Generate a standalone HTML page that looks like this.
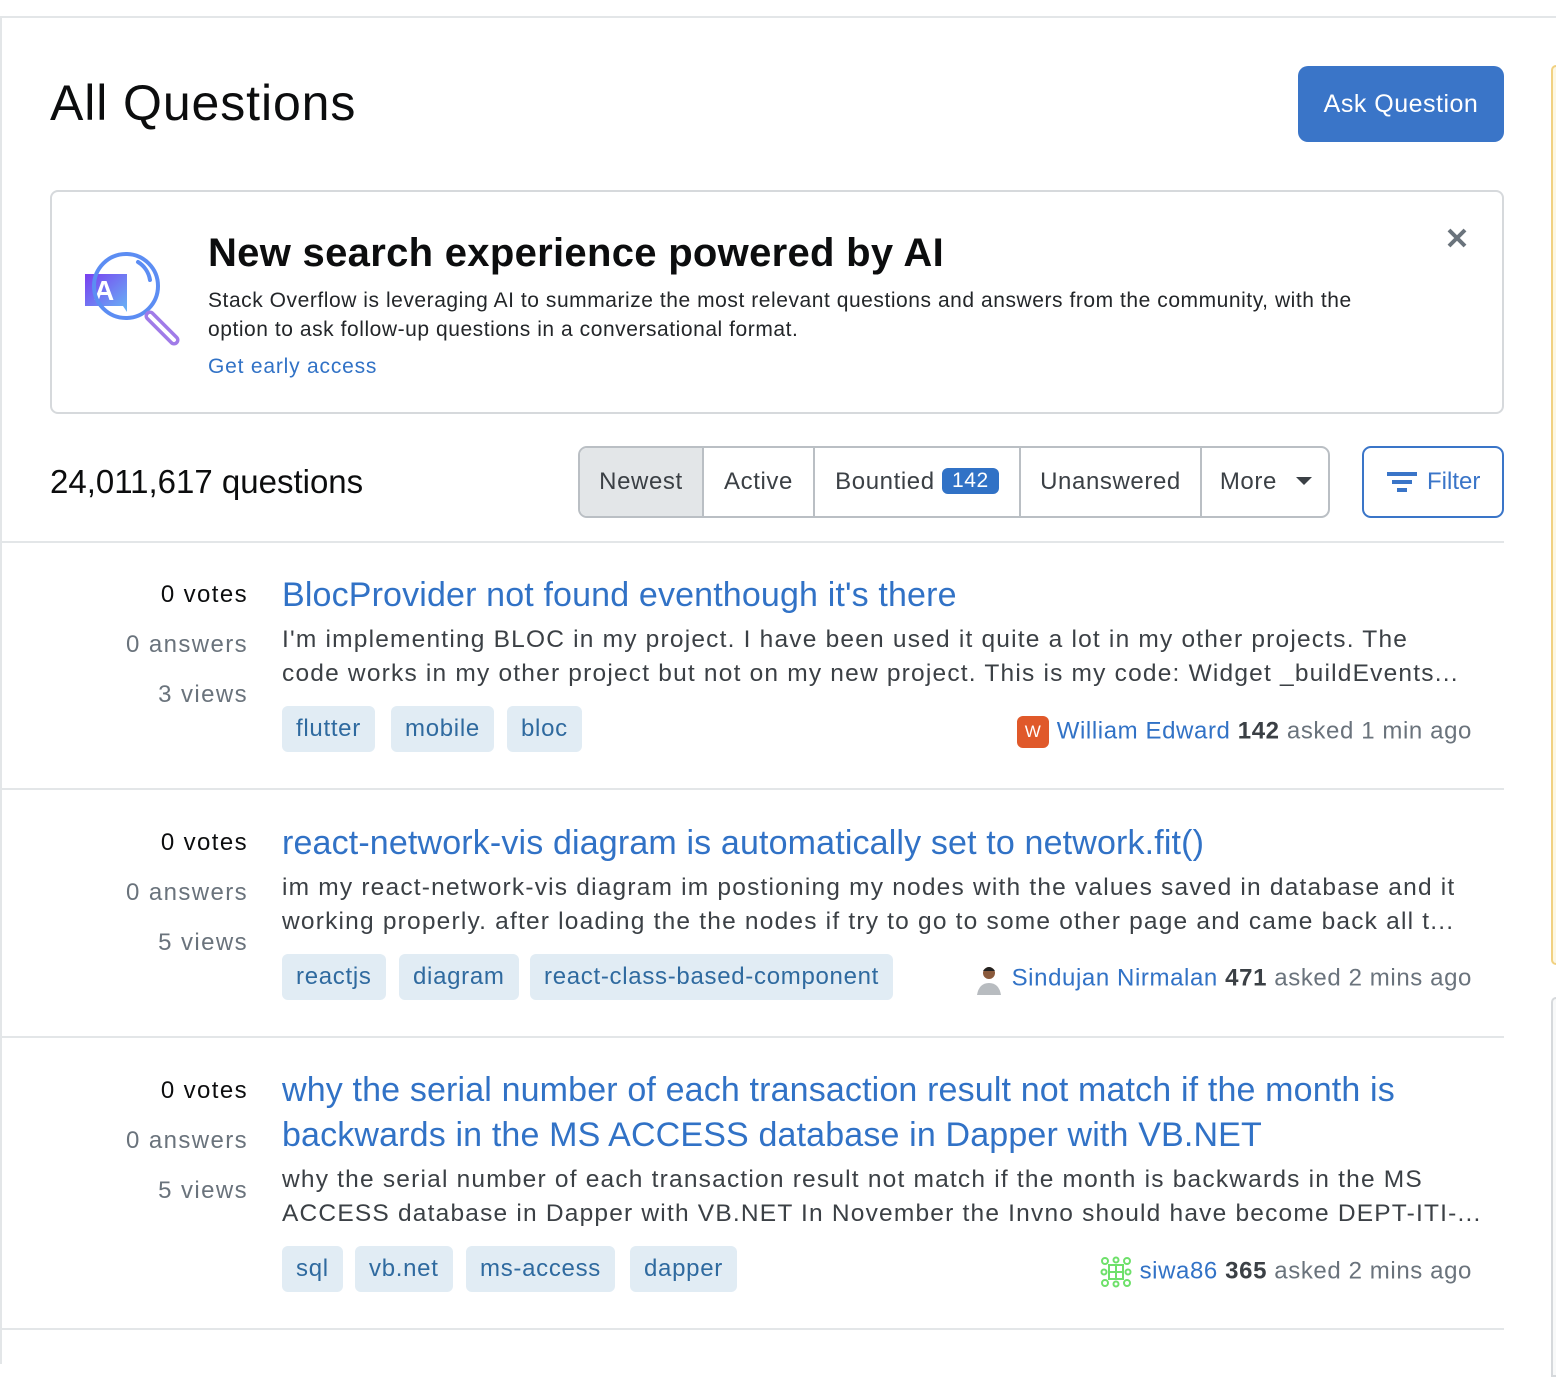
<!DOCTYPE html>
<html><head><meta charset="utf-8"><style>
*{box-sizing:border-box;margin:0;padding:0}
body{width:1556px;height:1364px;overflow:hidden;background:#fff;font-family:"Liberation Sans",Arial,sans-serif;color:#232629;position:relative}
.a{position:absolute;white-space:nowrap}
.blue{color:#3172c6}
.tag{position:absolute;height:46px;background:#e1ecf4;color:#2f6a9f;border-radius:6px;font-size:24px;line-height:46px;padding:0 14px;letter-spacing:0.7px}
.stat{position:absolute;right:1308px;font-size:24px;text-align:right;white-space:nowrap;letter-spacing:1.4px}
.title{position:absolute;left:282px;font-size:34px;color:#3172c6;line-height:45px;letter-spacing:0.15px}
.ex{position:absolute;left:282px;font-size:24.5px;color:#3b4045;line-height:34px;width:1220px;letter-spacing:1.2px;white-space:nowrap}
.sep{position:absolute;left:2px;width:1502px;height:2px;background:#e3e6e8}
.user{position:absolute;right:84px;font-size:24px;white-space:nowrap;color:#6a737c;letter-spacing:0.6px}
.user b{color:#3b4045}
.tab{position:absolute;top:0;height:68px;line-height:68px;font-size:24px;color:#3b4045;text-align:center;border-right:2px solid #babfc4;letter-spacing:0.6px}
</style></head><body>
<div class="a" style="left:0;top:16px;width:1556px;height:2px;background:#e3e6e8"></div>
<div class="a" style="left:0;top:16px;width:2px;height:1348px;background:#e3e6e8"></div>
<div class="a" style="left:1551px;top:65px;width:5px;height:900px;border:2px solid #f1d181;border-right:none;border-radius:8px 0 0 8px;background:#fdf7e2"></div>
<div class="a" style="left:1551px;top:997px;width:5px;height:380px;border:2px solid #d6d9dc;border-right:none;border-radius:8px 0 0 0;background:#f8f9f9"></div>

<div class="a" style="left:50px;top:72px;font-size:50px;line-height:62px;color:#0c0d0e;letter-spacing:0.9px">All Questions</div>
<div class="a" style="left:1298px;top:66px;width:206px;height:76px;background:#3a75c8;border-radius:10px;color:#fff;font-size:25px;line-height:76px;text-align:center;letter-spacing:0.5px">Ask Question</div>

<div class="a" style="left:50px;top:190px;width:1454px;height:224px;border:2px solid #d6d9dc;border-radius:8px"></div>
<svg class="a" style="left:80px;top:246px" width="104" height="104" viewBox="0 0 104 104">
<defs><linearGradient id="g" x1="0" y1="0" x2="1" y2="1"><stop offset="0" stop-color="#7a3ff0"/><stop offset="1" stop-color="#67b6f5"/></linearGradient></defs>
<path d="M5 28 h42 v38 l-4 -6 h-38 z" fill="url(#g)"/>
<text x="14" y="54" font-family="Liberation Sans" font-weight="bold" font-size="28" fill="#fff">A</text>
<circle cx="46" cy="40" r="32" fill="none" stroke="#5c8df3" stroke-width="4"/>
<path d="M58 16 a26 26 0 0 1 12 18" fill="none" stroke="#5c8df3" stroke-width="4" stroke-linecap="round"/>
<line x1="70" y1="70" x2="94" y2="94" stroke="#a07be8" stroke-width="11" stroke-linecap="round"/>
<line x1="70" y1="70" x2="94" y2="94" stroke="#fff" stroke-width="4" stroke-linecap="round"/>
</svg>
<div class="a" style="left:208px;top:228px;font-size:40px;font-weight:bold;line-height:50px;color:#0c0d0e;letter-spacing:0.3px">New search experience powered by AI</div>
<div class="a" style="left:208px;top:286px;font-size:21px;line-height:29px;color:#232629;white-space:normal;width:1200px;letter-spacing:0.55px">Stack Overflow is leveraging AI to summarize the most relevant questions and answers from the community, with the option to ask follow-up questions in a conversational format.</div>
<div class="a blue" style="left:208px;top:352px;font-size:21px;line-height:29px;letter-spacing:0.8px">Get early access</div>
<svg class="a" style="left:1446px;top:227px" width="22" height="22" viewBox="0 0 22 22"><path d="M3 3L19 19M19 3L3 19" stroke="#6a737c" stroke-width="4"/></svg>

<div class="a" style="left:50px;top:462px;font-size:33px;line-height:40px;color:#0c0d0e">24,011,617 questions</div>
<div class="a" style="left:578px;top:446px;width:752px;height:72px;border:2px solid #babfc4;border-radius:9px;overflow:hidden">
<div class="tab" style="left:0;width:124px;background:#e3e6e8">Newest</div>
<div class="tab" style="left:124px;width:111px">Active</div>
<div class="tab" style="left:235px;width:206px">Bountied <span style="display:inline-block;background:#3172c6;color:#fff;border-radius:6px;padding:0 10px;line-height:26px;font-size:21px;vertical-align:2px">142</span></div>
<div class="tab" style="left:441px;width:181px">Unanswered</div>
<div class="tab" style="left:622px;width:128px;border:none">More <span style="display:inline-block;width:0;height:0;border-left:8px solid transparent;border-right:8px solid transparent;border-top:8px solid #3b4045;vertical-align:4px;margin-left:12px"></span></div>
</div>
<div class="a" style="left:1362px;top:446px;width:142px;height:72px;border:2px solid #3a75c8;border-radius:9px;color:#3a75c8;font-size:24px;line-height:68px">
<svg style="position:absolute;left:23px;top:24px" width="30" height="20" viewBox="0 0 30 20"><rect x="0" y="0" width="30" height="4" fill="#3a75c8"/><rect x="5" y="8" width="20" height="4" fill="#3a75c8"/><rect x="10" y="16" width="10" height="4" fill="#3a75c8"/></svg>
<span style="position:absolute;left:63px">Filter</span></div>

<div class="sep" style="top:541px"></div>
<div class="stat" style="top:581px;color:#0c0d0e">0 votes</div>
<div class="stat" style="top:631px;color:#6a737c">0 answers</div>
<div class="stat" style="top:681px;color:#6a737c">3 views</div>
<div class="title" style="top:573px">BlocProvider not found eventhough it's there</div>
<div class="ex" style="top:623px">I'm implementing BLOC in my project. I have been used it quite a lot in my other projects. The<br>code works in my other project but not on my new project. This is my code: Widget _buildEvents...</div>
<div class="tag" style="left:282px;top:706px">flutter</div>
<div class="tag" style="left:391px;top:706px">mobile</div>
<div class="tag" style="left:507px;top:706px">bloc</div>
<div class="user" style="top:716px"><span style="display:inline-block;width:32px;height:32px;background:#e0592a;border-radius:6px;color:#fff;font-size:17px;line-height:32px;text-align:center;vertical-align:middle;margin-right:8px;letter-spacing:0">W</span><span class="blue">William Edward</span> <b>142</b> asked 1 min ago</div>

<div class="sep" style="top:788px"></div>
<div class="stat" style="top:829px;color:#0c0d0e">0 votes</div>
<div class="stat" style="top:879px;color:#6a737c">0 answers</div>
<div class="stat" style="top:929px;color:#6a737c">5 views</div>
<div class="title" style="top:821px">react-network-vis diagram is automatically set to network.fit()</div>
<div class="ex" style="top:871px">im my react-network-vis diagram im postioning my nodes with the values saved in database and it<br>working properly. after loading the the nodes if try to go to some other page and came back all t...</div>
<div class="tag" style="left:282px;top:954px">reactjs</div>
<div class="tag" style="left:399px;top:954px">diagram</div>
<div class="tag" style="left:530px;top:954px">react-class-based-component</div>
<div class="user" style="top:963px"><svg width="30" height="32" viewBox="0 0 30 32" style="vertical-align:middle;margin-right:8px"><circle cx="15" cy="10" r="6" fill="#8a5a3c"/><path d="M9 8 q6 -8 12 0" fill="#222"/><path d="M3 32 q2 -12 12 -12 q10 0 12 12z" fill="#b8bcc0"/></svg><span class="blue">Sindujan Nirmalan</span> <b>471</b> asked 2 mins ago</div>

<div class="sep" style="top:1036px"></div>
<div class="stat" style="top:1077px;color:#0c0d0e">0 votes</div>
<div class="stat" style="top:1127px;color:#6a737c">0 answers</div>
<div class="stat" style="top:1177px;color:#6a737c">5 views</div>
<div class="title" style="top:1068px">why the serial number of each transaction result not match if the month is<br>backwards in the MS ACCESS database in Dapper with VB.NET</div>
<div class="ex" style="top:1163px">why the serial number of each transaction result not match if the month is backwards in the MS<br>ACCESS database in Dapper with VB.NET In November the Invno should have become DEPT-ITI-...</div>
<div class="tag" style="left:282px;top:1246px">sql</div>
<div class="tag" style="left:355px;top:1246px">vb.net</div>
<div class="tag" style="left:466px;top:1246px">ms-access</div>
<div class="tag" style="left:630px;top:1246px">dapper</div>
<div class="user" style="top:1256px"><svg width="32" height="32" viewBox="0 0 32 32" style="vertical-align:middle;margin-right:8px"><g fill="none" stroke="#6ee06a" stroke-width="2"><rect x="9" y="9" width="14" height="14"/><path d="M9 16h14M16 9v14"/><circle cx="5" cy="5" r="3"/><circle cx="27" cy="5" r="3"/><circle cx="5" cy="27" r="3"/><circle cx="27" cy="27" r="3"/><circle cx="16" cy="4" r="2.5"/><circle cx="16" cy="28" r="2.5"/><circle cx="4" cy="16" r="2.5"/><circle cx="28" cy="16" r="2.5"/></g></svg><span class="blue">siwa86</span> <b>365</b> asked 2 mins ago</div>

<div class="sep" style="top:1328px"></div>
</body></html>
